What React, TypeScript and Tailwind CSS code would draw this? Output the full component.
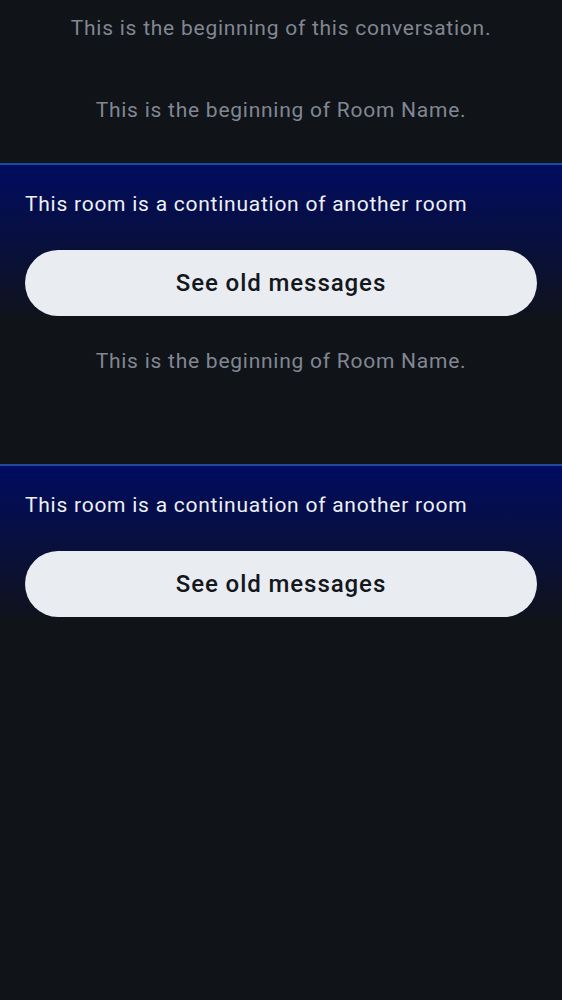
import React from "react";

// ---- timeline start / tombstone preview ---- //

const Beginning = ({ text, className = "" }: { text: string; className?: string }) => (
  <p className={`text-center text-[21px] leading-6 tracking-[0.75px] text-[#818792] ${className}`}>{text}</p>
);

const Continuation = () => (
  <section className="border-t-2 border-[#1b4aa0] bg-[linear-gradient(to_bottom,#000c60_0px,#101318_160px)] px-[25px]">
    <p className="pt-[27px] text-[21px] leading-6 tracking-[0.75px] text-[#eef0f4]">
      This room is a continuation of another room
    </p>
    <button
      type="button"
      className="mt-[34px] flex h-[66px] w-full items-center justify-center rounded-full bg-[#e9ecf1] font-['Roboto_Medium','Roboto',sans-serif] text-[24px] font-normal tracking-[0.9px] text-[#14171c]"
    >
      See old messages
    </button>
  </section>
);

export default function App() {
  return (
    <div className="min-h-screen w-full bg-[#101318] font-['Roboto','Liberation_Sans',sans-serif]">
      <Beginning text="This is the beginning of this conversation." className="pt-4" />
      <Beginning text="This is the beginning of Room Name." className="mt-[58px] mb-[41px]" />
      <Continuation />
      <Beginning text="This is the beginning of Room Name." className="mt-[33px] mb-[91px]" />
      <Continuation />
    </div>
  );
}
